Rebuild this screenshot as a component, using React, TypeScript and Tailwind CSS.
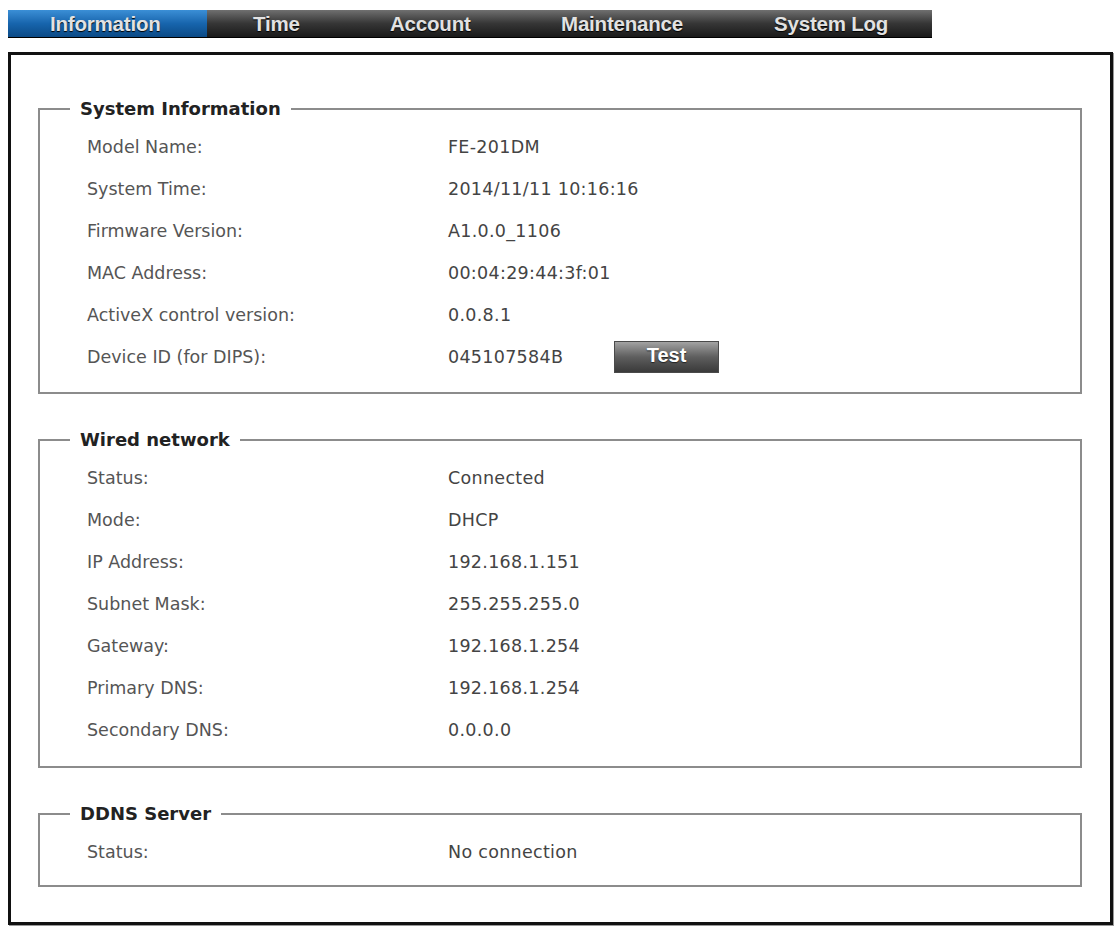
import React from "react";

type Row = { label: string; value: string; button?: string };

const tabs = [
  { name: "Information", cls: "w-[199px] pl-[42px]", active: true },
  { name: "Time", cls: "w-[137px] pl-[46px]" },
  { name: "Account", cls: "w-[171px] pl-[46px]" },
  { name: "Maintenance", cls: "w-[213px] pl-[46px]" },
  { name: "System Log", cls: "flex-1 pl-[46px]" },
];

const systemInfo: Row[] = [
  { label: "Model Name:", value: "FE-201DM" },
  { label: "System Time:", value: "2014/11/11 10:16:16" },
  { label: "Firmware Version:", value: "A1.0.0_1106" },
  { label: "MAC Address:", value: "00:04:29:44:3f:01" },
  { label: "ActiveX control version:", value: "0.0.8.1" },
  { label: "Device ID (for DIPS):", value: "045107584B", button: "Test" },
];

const wired: Row[] = [
  { label: "Status:", value: "Connected" },
  { label: "Mode:", value: "DHCP" },
  { label: "IP Address:", value: "192.168.1.151" },
  { label: "Subnet Mask:", value: "255.255.255.0" },
  { label: "Gateway:", value: "192.168.1.254" },
  { label: "Primary DNS:", value: "192.168.1.254" },
  { label: "Secondary DNS:", value: "0.0.0.0" },
];

const ddns: Row[] = [{ label: "Status:", value: "No connection" }];

function TabBar() {
  return (
    <div className="flex h-[28px] w-[924px] bg-gradient-to-b from-[#707070] via-[#363636] to-[#1a1a1a] border-b border-black font-['Liberation_Sans',Arial,sans-serif]">
      {tabs.map((t) => (
        <div
          key={t.name}
          className={`${t.cls} flex items-center pt-[1px] text-[20.5px] font-bold tracking-[-0.2px] text-[#e2e2e2] [text-shadow:0_1px_1px_#000] ${
            t.active ? "bg-gradient-to-b from-[#3b8fd6] via-[#1765ad] to-[#0b4a86]" : ""
          }`}
        >
          {t.name}
        </div>
      ))}
    </div>
  );
}

function Section({ title, rows, className = "" }: { title: string; rows: Row[]; className?: string }) {
  return (
    <fieldset className={`border-2 border-[#8c8c8c] pt-[7px] ${className}`}>
      <legend className="ml-[30px] px-[10px] text-[18px] leading-[20px] font-bold text-[#222]">{title}</legend>
      {rows.map((r) => (
        <div key={r.label} className="flex h-[42px] items-center text-[17.5px] whitespace-nowrap">
          <div className="w-[408px] shrink-0 pl-[47px] text-[#555]">{r.label}</div>
          <div className="w-[166px] shrink-0 tracking-[0.3px] text-[#444]">{r.value}</div>
          {r.button && (
            <button className="h-[32px] w-[105px] shrink-0 border border-[#4a4a4a] bg-gradient-to-b from-[#a3a3a3] via-[#5e5e5e] to-[#3a3a3a] font-['Liberation_Sans',Arial,sans-serif] text-[20px] font-bold text-white leading-none pb-[4px] [text-shadow:0_1px_1px_#222]">
              {r.button}
            </button>
          )}
        </div>
      ))}
    </fieldset>
  );
}

export default function App() {
  return (
    <div className="min-h-screen bg-white pl-[8px] pt-[10px] font-['DejaVu_Sans',Verdana,sans-serif]">
      <TabBar />
      <div className="mt-[14px] w-[1105px] border-[3px] border-[#111] pl-[27px] pr-[28px] pt-[44px] pb-[35px] shadow-[1px_1px_0_#999]">
        <Section title="System Information" rows={systemInfo} className="pb-[14px]" />
        <Section title="Wired network" rows={wired} className="mt-[36px] pb-[15px]" />
        <Section title="DDNS Server" rows={ddns} className="mt-[36px] pb-[12px]" />
      </div>
    </div>
  );
}
